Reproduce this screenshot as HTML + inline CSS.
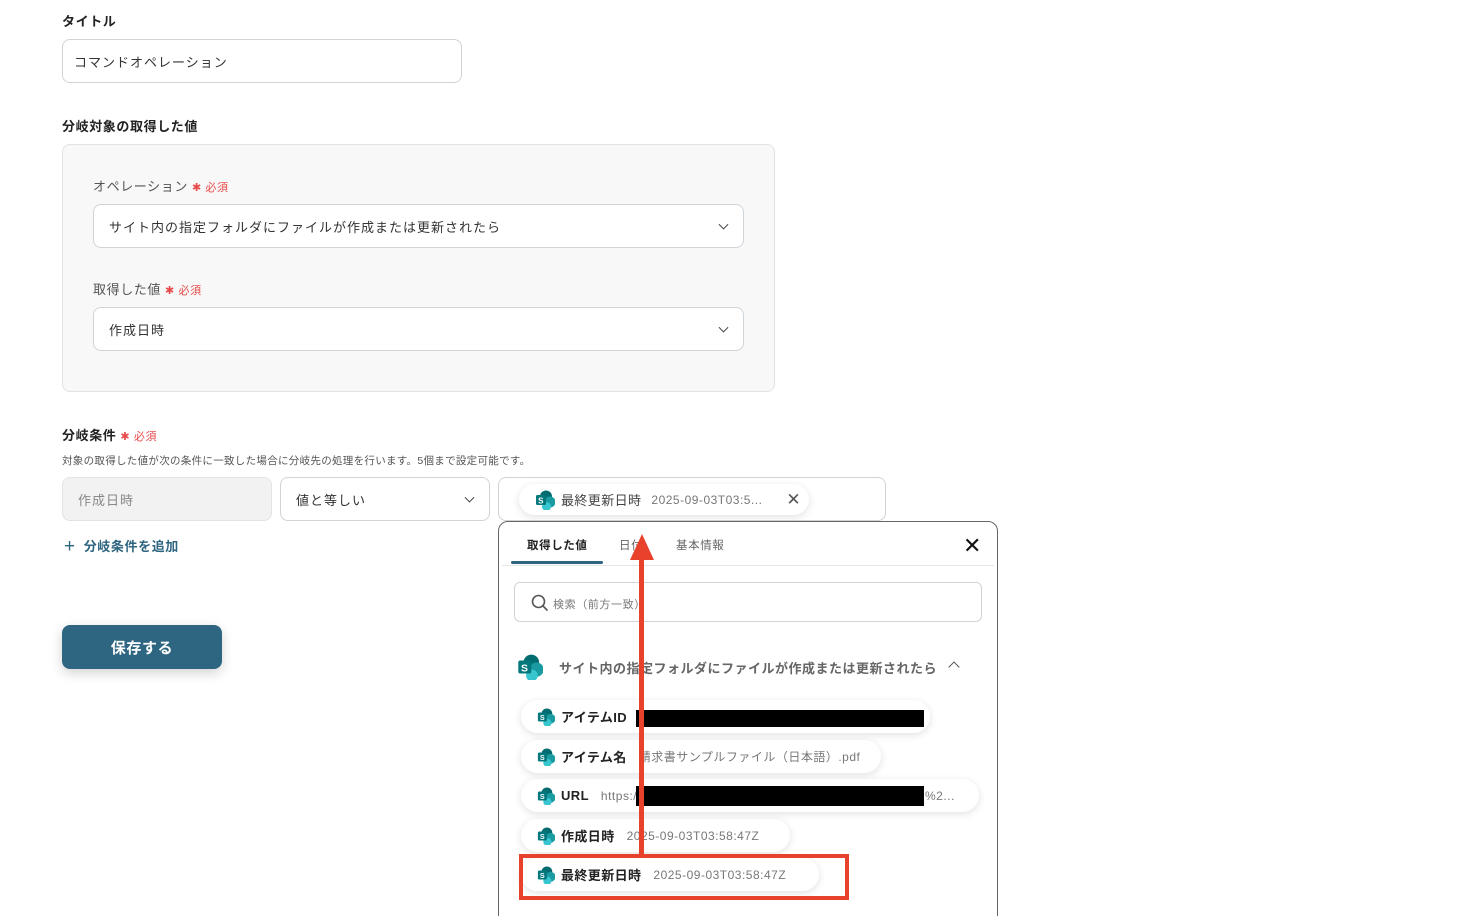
<!DOCTYPE html>
<html><head><meta charset="utf-8"><style>
*{box-sizing:border-box;margin:0;padding:0}
html{overflow:hidden;width:1462px;height:916px}
body{width:1462px;height:916px;background:#fff;position:relative;overflow:hidden;font-family:"Liberation Sans","Noto Sans CJK JP",sans-serif;color:#333;letter-spacing:.6px}
.a{position:absolute}
.lbl{font-size:13px;font-weight:bold;color:#222}
.req{color:#e84a4a;font-size:11px;font-weight:normal;margin-left:4px}
.inp{position:absolute;border:1px solid #cfd4d9;border-radius:8px;background:#fff;font-size:13px;color:#333;display:flex;align-items:center;padding-left:15px;letter-spacing:1px}
.chev{position:absolute;right:16px;top:50%;width:7px;height:7px;border-right:1.6px solid #444;border-bottom:1.6px solid #444;transform:translateY(-70%) rotate(45deg)}
.chip{position:absolute;height:33px;border-radius:17px;background:#fff;box-shadow:0 2px 8px rgba(0,0,0,.12);display:flex;align-items:center;padding-left:16px;font-size:13px;font-weight:bold;color:#222;white-space:nowrap;letter-spacing:.4px}
.chip .v{font-weight:normal;color:#777;font-size:12px;margin-left:12px;letter-spacing:.5px}
.chip svg{margin-right:6px}
.blk{position:absolute;background:#000}
</style></head><body>
<svg width="0" height="0" style="position:absolute"><defs><g id="sp"><circle cx="11" cy="6.5" r="6" fill="#036c70"/><circle cx="15" cy="12" r="5.5" fill="#1a9ba1"/><circle cx="11.5" cy="16.5" r="4.5" fill="#37c6d0"/><rect x="1" y="5" width="10" height="10" rx="1.5" fill="#03787c"/><text x="6" y="13.5" font-size="8" font-weight="bold" fill="#fff" text-anchor="middle" font-family="Liberation Sans">S</text></g></defs></svg>

<div class="a lbl" style="left:62px;top:11px">タイトル</div>
<div class="inp" style="left:62px;top:39px;width:400px;height:44px;padding-left:11px">コマンドオペレーション</div>

<div class="a lbl" style="left:62px;top:116px">分岐対象の取得した値</div>
<div class="a" style="left:62px;top:144px;width:713px;height:248px;background:#f8f8f8;border:1px solid #e2e2e2;border-radius:8px"></div>
<div class="a" style="left:93px;top:176px;font-size:13px;color:#555">オペレーション<span class="req">✱ 必須</span></div>
<div class="inp" style="left:93px;top:204px;width:651px;height:44px">サイト内の指定フォルダにファイルが作成または更新されたら<div class="chev"></div></div>
<div class="a" style="left:93px;top:279px;font-size:13px;color:#555">取得した値<span class="req">✱ 必須</span></div>
<div class="inp" style="left:93px;top:307px;width:651px;height:44px">作成日時<div class="chev"></div></div>

<div class="a lbl" style="left:62px;top:425px">分岐条件<span class="req">✱ 必須</span></div>
<div class="a" style="left:62px;top:453px;font-size:10.5px;color:#555;letter-spacing:.3px">対象の取得した値が次の条件に一致した場合に分岐先の処理を行います。5個まで設定可能です。</div>
<div class="inp" style="left:62px;top:477px;width:210px;height:44px;background:#f2f2f2;color:#888;border-color:#e3e3e3">作成日時</div>
<div class="inp" style="left:280px;top:477px;width:210px;height:44px">値と等しい<div class="chev"></div></div>
<div class="inp" style="left:498px;top:477px;width:388px;height:44px"></div>
<div class="chip" style="left:519px;top:484px;width:290px;height:31px;font-weight:normal;font-size:13px;color:#444"><svg width="20" height="20"><use href="#sp"/></svg>最終更新日時<span class="v" style="margin-left:10px">2025-09-03T03:5...</span><span style="position:absolute;right:8px;font-size:17px;color:#555">✕</span></div>

<div class="a" style="left:64px;top:535px;font-size:13px;font-weight:bold;color:#2e6580"><span style="font-size:19px;font-weight:normal;margin-right:8px;position:relative;top:1px">+</span>分岐条件を追加</div>
<div class="a" style="left:62px;top:625px;width:160px;height:44px;background:#2e6580;border-radius:8px;color:#fff;font-weight:bold;font-size:15px;display:flex;align-items:center;justify-content:center;box-shadow:0 4px 12px rgba(0,0,0,.18)">保存する</div>

<div class="a" style="left:498px;top:521px;width:500px;height:410px;border:1px solid #666;border-radius:10px;background:#fff"></div>
<div class="a" style="left:527px;top:537px;font-size:11.5px;font-weight:bold;color:#222">取得した値</div>
<div class="a" style="left:619px;top:537px;font-size:11.5px;color:#666">日付</div>
<div class="a" style="left:676px;top:537px;font-size:11.5px;color:#666">基本情報</div>
<div class="a" style="left:511px;top:561px;width:92px;height:3px;background:#2e6580;border-radius:2px"></div>
<div class="a" style="left:502px;top:565px;width:492px;height:1px;background:#e5e5e5"></div>
<div class="a" style="left:963px;top:533px;font-size:22px;color:#111;line-height:26px;font-weight:normal">✕</div>
<div class="a" style="left:514px;top:582px;width:468px;height:40px;border:1px solid #cfd4d9;border-radius:6px"></div>
<svg class="a" style="left:531px;top:594px" width="18" height="18"><circle cx="7.5" cy="7.5" r="6" fill="none" stroke="#555" stroke-width="1.6"/><line x1="12" y1="12" x2="16.5" y2="16.5" stroke="#555" stroke-width="1.6"/></svg>
<div class="a" style="left:553px;top:596px;font-size:11px;color:#777">検索（前方一致）</div>
<svg class="a" style="left:517px;top:654px" width="26" height="26" viewBox="0 0 20 20"><use href="#sp"/></svg>
<div class="a" style="left:559px;top:658px;font-size:13px;font-weight:bold;color:#666;letter-spacing:.5px">サイト内の指定フォルダにファイルが作成または更新されたら</div>
<div class="a" style="left:950px;top:663px;width:8px;height:8px;border-left:1.8px solid #555;border-top:1.8px solid #555;transform:rotate(45deg)"></div>

<div class="chip" style="left:521px;top:700px;width:409px"><svg width="18" height="18" viewBox="0 0 20 20"><use href="#sp"/></svg>アイテムID</div>
<div class="chip" style="left:521px;top:740px;width:360px"><svg width="18" height="18" viewBox="0 0 20 20"><use href="#sp"/></svg>アイテム名<span class="v">請求書サンプルファイル（日本語）.pdf</span></div>
<div class="chip" style="left:521px;top:779px;width:458px"><svg width="18" height="18" viewBox="0 0 20 20"><use href="#sp"/></svg>URL<span class="v">https:/</span><span class="v" style="position:absolute;left:404px;margin:0">%2...</span></div>
<div class="chip" style="left:521px;top:819px;width:269px"><svg width="18" height="18" viewBox="0 0 20 20"><use href="#sp"/></svg>作成日時<span class="v">2025-09-03T03:58:47Z</span></div>
<div class="chip" style="left:521px;top:858px;width:298px"><svg width="18" height="18" viewBox="0 0 20 20"><use href="#sp"/></svg>最終更新日時<span class="v">2025-09-03T03:58:47Z</span></div>
<div class="blk" style="left:636px;top:710px;width:288px;height:17px"></div>
<div class="blk" style="left:636px;top:786px;width:288px;height:20px"></div>

<div class="a" style="left:519px;top:854px;width:330px;height:46px;border:4px solid #e8412c"></div>
<div class="a" style="left:639px;top:558px;width:5px;height:298px;background:#e8412c"></div>
<svg class="a" style="left:629px;top:534px" width="26" height="26"><polygon points="13,0 25,26 1,26" fill="#e8412c"/></svg>
</body></html>
